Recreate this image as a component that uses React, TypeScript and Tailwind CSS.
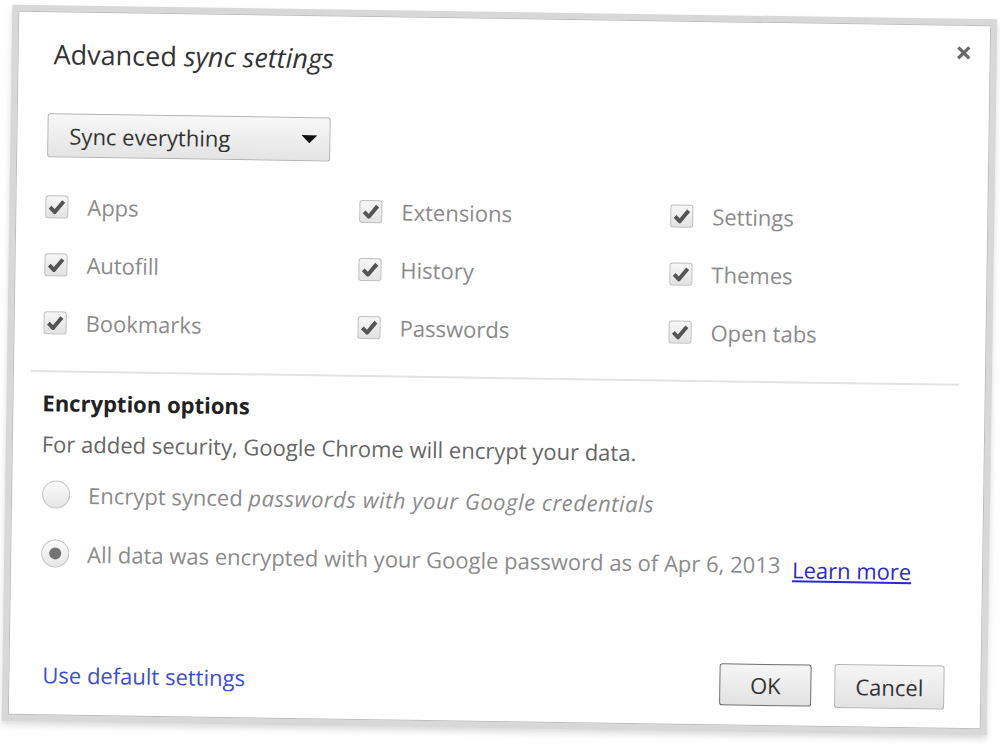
import React from "react";

const items = [
  ["Apps", "Extensions", "Settings"],
  ["Autofill", "History", "Themes"],
  ["Bookmarks", "Passwords", "Open tabs"],
];

const Checkbox: React.FC<{ label: string }> = ({ label }) => (
  <div className="flex items-center h-[58px] gap-[19px]">
    <span className="w-[23px] h-[23px] rounded-[3px] border border-[#bdbdbd] bg-gradient-to-b from-[#f7f7f7] to-[#e2e2e2] flex items-center justify-center shrink-0">
      <svg viewBox="0 0 24 24" className="w-[19px] h-[19px]">
        <path d="M3.5 12.5 L9.5 18.5 L20.5 5" fill="none" stroke="#555" strokeWidth="5" strokeLinejoin="round" />
      </svg>
    </span>
    <span className="text-[22px] text-[#8b8b8b] leading-none">{label}</span>
  </div>
);

const Radio: React.FC<{ checked?: boolean; children: React.ReactNode }> = ({ checked, children }) => (
  <div className="flex items-center h-[40px] gap-[18px]">
    <span className="w-[28px] h-[28px] rounded-full border border-[#c4c4c4] bg-gradient-to-b from-[#fbfbfb] to-[#e6e6e6] flex items-center justify-center shrink-0">
      {checked && <span className="w-[12px] h-[12px] rounded-full bg-[#747474]" />}
    </span>
    <span className="text-[22px] text-[#8b8b8b] leading-none whitespace-nowrap">{children}</span>
  </div>
);

export default function App() {
  return (
    <div className="w-[1000px] h-[750px] bg-white overflow-hidden pt-[18px] pl-[13px] font-['Open_Sans',sans-serif]">
      {/* Dialog */}
      <div className="relative w-[973px] h-[704px] bg-white border border-[#bdbdbd] rotate-[0.85deg] shadow-[0_0_0_6px_#d8d8d8,0_4px_6px_6px_rgba(0,0,0,0.14)] flex flex-col">
        <button className="absolute top-[19px] right-[18px] w-[16px] h-[16px]">
          <svg viewBox="0 0 16 16" className="w-[16px] h-[16px]">
            <path d="M2.5 2.5 L13.5 13.5 M13.5 2.5 L2.5 13.5" stroke="#6a6a6a" strokeWidth="3.2" />
          </svg>
        </button>

        {/* Header */}
        <div className="pt-[24px] pl-[35px]">
          <h1 className="text-[27px] leading-[36px] text-[#333]">
            Advanced <span className="italic">sync settings</span>
          </h1>
        </div>

        {/* Body */}
        <div className="px-[30px]">
          <div className="mt-[41px] w-[283px] h-[44px] rounded-[3px] border border-[#b4b4b4] bg-gradient-to-b from-[#f8f8f8] to-[#e4e4e4] flex items-center justify-between pl-[21px] pr-[12px]">
            <span className="text-[22px] text-[#333] leading-none">Sync everything</span>
            <svg viewBox="0 0 16 8" className="w-[16px] h-[8px]">
              <path d="M0 0 L16 0 L8 8 Z" fill="#111" />
            </svg>
          </div>

          <div className="mt-[20px] grid grid-cols-[314px_311px_1fr] -ml-px">
            {items.flat().map((label) => (
              <Checkbox key={label} label={label} />
            ))}
          </div>

          <div className="mt-[19px] -ml-[13px] w-[928px] h-[2px] bg-[#e3e3e3]" />

          <h2 className="mt-[15px] text-[22px] leading-[30px] font-bold text-[#222] -ml-px">Encryption options</h2>
          <p className="mt-[11px] text-[22px] leading-[30px] text-[#666] -ml-px">
            For added security, Google Chrome will encrypt your data.
          </p>

          <div className="mt-[16px] flex flex-col gap-[19px]">
            <Radio>
              Encrypt synced <span className="italic tracking-[0.55px]">passwords with your Google credentials</span>
            </Radio>
            <Radio checked>
              All data was encrypted with your Google password as of Apr 6, 2013{" "}
              <a href="#" className="inline-block ml-[6px] translate-y-[5px] text-[#2b2bcc] underline">Learn more</a>
            </Radio>
          </div>
        </div>

        {/* Footer */}
        <div className="mt-auto pb-[18px] pl-[33px] pr-[36px] flex items-center justify-between">
          <a href="#" className="text-[22px] text-[#3d4fcf] leading-none">Use default settings</a>
          <div className="flex items-center gap-[23px]">
            <button className="w-[92px] h-[42px] rounded-[3px] border border-[#6d6d6d] bg-gradient-to-b from-[#f6f6f6] to-[#e2e2e2] text-[22px] text-[#333]">
              OK
            </button>
            <button className="w-[110px] h-[44px] rounded-[3px] border border-[#b4b4b4] bg-gradient-to-b from-[#f6f6f6] to-[#e2e2e2] text-[22px] text-[#333]">
              Cancel
            </button>
          </div>
        </div>
      </div>
    </div>
  );
}
